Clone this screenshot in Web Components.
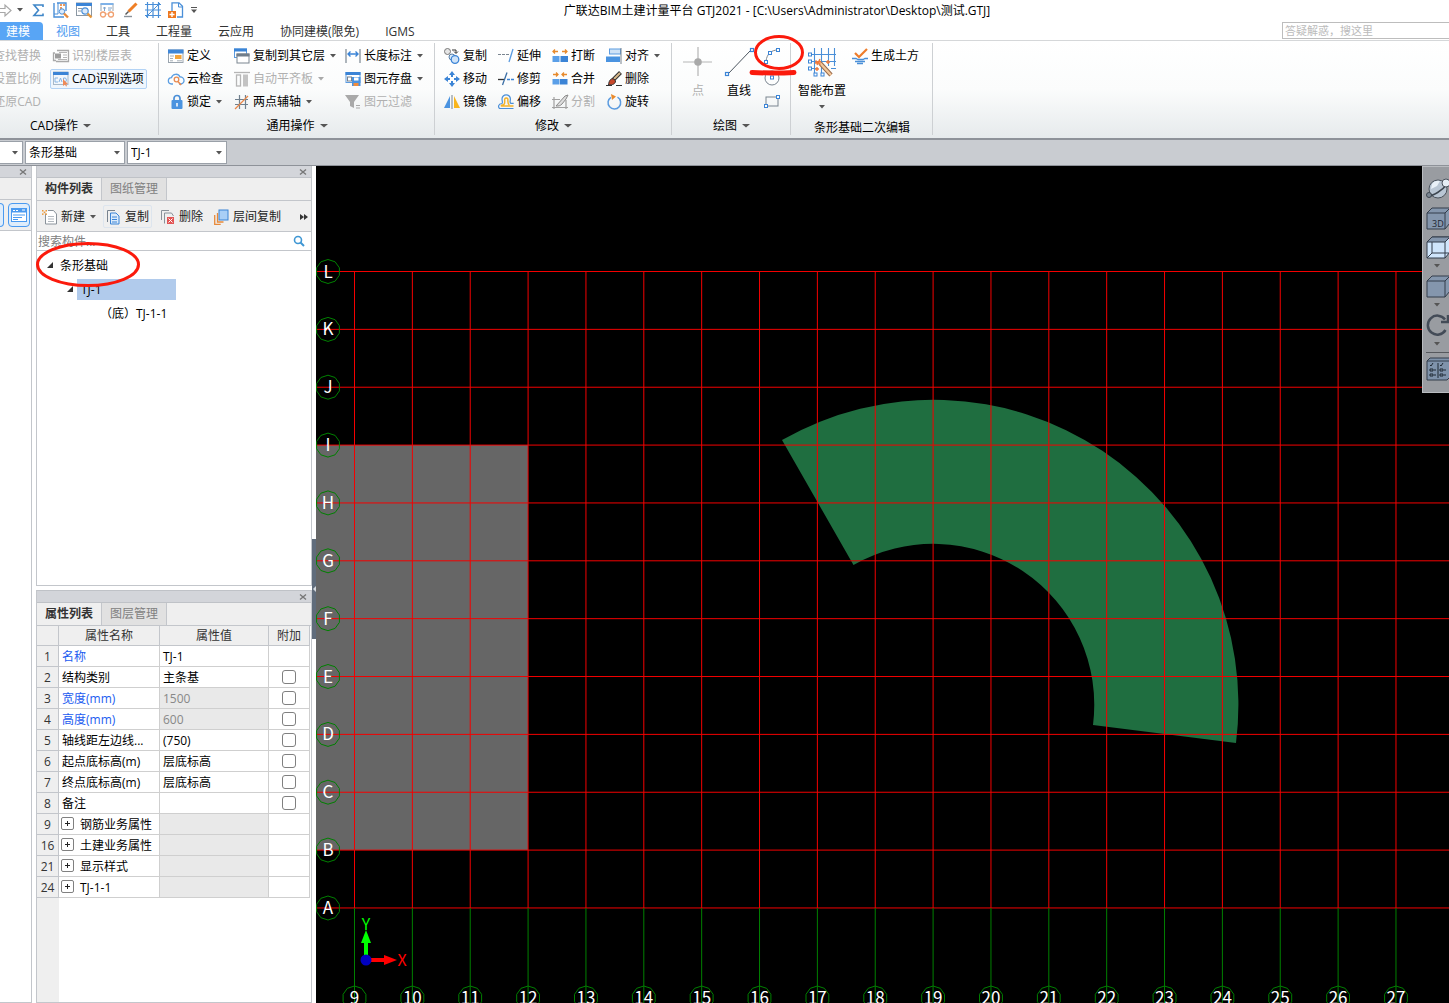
<!DOCTYPE html>
<html lang="zh-CN">
<head>
<meta charset="utf-8">
<title>广联达BIM土建计量平台 GTJ2021</title>
<style>
  html, body { margin: 0; height: 100%; overflow: hidden; }
  body { font: 12px/16px "Open Sans", "Noto Sans CJK SC", sans-serif; color: #000; background: #fff; }
</style>
</head>
<body>
<gtj-app></gtj-app>

<script>
const ICONS = {
  redo: ['16', '<path d="M4 6.500h7V3l6 5.500-6 5.500V10.500H4z" fill="#fff" stroke="#a8a8a8" stroke-width="1.200"/>'],
  sigma: ['16', '<path d="M13 5V3H4l4.500 5.300L4 13.500h9v-2" fill="none" stroke="#3f86c8" stroke-width="1.600"/>'],
  findmodel: ['16', '<path d="M1 1v14h10M4 1h9v8" fill="none" stroke="#4a8fd8" stroke-width="1.400"/><path d="M1 12h4V1" fill="none" stroke="#4a8fd8"/><g fill="#ee9a5c"><rect x="7" y="2" width="2" height="2"/><rect x="10" y="2" width="2" height="2"/><rect x="7" y="5" width="2" height="2"/></g><circle cx="9" cy="9.500" r="2.700" fill="#dceafa" stroke="#4a8fd8"/><path d="M11 11.500l4 4" stroke="#e58a3c" stroke-width="2.400"/>'],
  findwin: ['16', '<rect x=".5" y="1" width="15" height="12.500" fill="#fff" stroke="#8b97a3"/><rect y="1" width="16" height="3" fill="#3b84d6"/><path d="M2 6.500h4M2 9h3" stroke="#8b97a3"/><circle cx="9" cy="9" r="3.200" fill="#dceafa" stroke="#4a8fd8" stroke-width="1.200"/><path d="M11.500 11.500l4 4" stroke="#e5963c" stroke-width="2.400"/>'],
  glasses: ['16', '<path d="M2 9V1.500h12V9" fill="none" stroke="#9aa6b0"/><rect x="1.500" y="1" width="13" height="2" fill="#7fb2e8"/><path d="M4 6h3M9 6h4M9 8h3M5.500 5v4" stroke="#7fa4cc"/><g fill="#fff" stroke="#f0a070" stroke-width="1.300"><circle cx="4" cy="12.500" r="2.500"/><circle cx="12" cy="12.500" r="2.500"/></g><path d="M6.500 12h3" stroke="#f0a070"/>'],
  brush: ['16', '<path d="M6.500 9.500l8-8" stroke="#ef7f26" stroke-width="3"/><path d="M6.500 9.500l-3 3" stroke="#555" stroke-width="1.500"/><path d="M2 14.500h8" stroke="#8a929a" stroke-width="1.400"/>'],
  hatch: ['16', '<path d="M0 2.500h16M0 8h16M0 13.500h16M2.500 0v16M8 0v16M13.500 0v16" stroke="#4a8fd8" stroke-width="1.200"/><path d="M1 15L15 1" stroke="#4a8fd8"/>'],
  newdoc: ['16', '<path d="M4 9V.8h7l3.500 3.500V15H9" fill="#fff" stroke="#4a8fd8" stroke-width="1.300"/><path d="M10.500 1v4h4" fill="none" stroke="#4a8fd8"/><rect y="9" width="8" height="7" fill="#ee7820"/><path d="M4 10v5M1.500 12.500h5" stroke="#fff" stroke-width="1.400"/>'],
  floorlist: ['16', '<path d="M4 2.500h11.500v11H3M2 5H.5v7.500H3" fill="none" stroke="#a9a9a9" stroke-width="1.300"/><rect x="2" y="5.500" width="6" height="5" fill="#9d9d9d"/><path d="M6 4.500h8M10 7h4M10 9.500h4M5 11.500h9" stroke="#b5b5b5"/>'],
  cad: ['16', '<rect x=".5" y="1" width="14.500" height="12.500" fill="#f2f7fc" stroke="#a9b9c9"/><rect y="1" width="15.500" height="3" fill="#3b84d6"/><path d="M5 7H2v4h3M6 11l1.500-4L9 11M10.500 7v4h2l1-2-1-2z" fill="none" stroke="#86b4e4"/><path d="M10 8v7l2-1.500 1 2 1-.5-1-2h2z" fill="#ef8a58"/>'],
  define: ['16', '<rect x=".5" y="2" width="14.500" height="12.500" fill="#fff" stroke="#9aa4ae"/><rect y="1.500" width="15.500" height="4" fill="#3f87d8"/><path d="M2 8h4M2 10.500h3M2 12.800h3M9 12.800h5" stroke="#a6aeb6"/><rect x="7" y="7" width="6.500" height="4" fill="#f3a43b"/>'],
  cloud: ['16', '<path d="M5 13H3.500a3 3 0 010-6.300A4.500 4.500 0 0112 6a3.500 3.500 0 011 7h-2" fill="none" stroke="#5b9ee2" stroke-width="1.300"/><circle cx="8.500" cy="8.500" r="2.300" fill="none" stroke="#e88b52" stroke-width="1.300"/><path d="M10 10.500l3 3.500" stroke="#e88b52" stroke-width="1.600"/>'],
  lock: ['16', '<path d="M6 7V4.500a3 3 0 016 0V7" fill="none" stroke="#4a8fd8" stroke-width="1.700"/><rect x="3.500" y="6" width="11" height="9" rx="1" fill="#4a93e0"/><path d="M9 9v3.500" stroke="#fff" stroke-width="1.500"/>'],
  copyfloor: ['16', '<rect x=".5" y="1" width="12" height="8.500" fill="#fff" stroke="#5b9be0"/><rect y=".5" width="13" height="3" fill="#3b84d6"/><rect x="3" y="6" width="12" height="9" fill="#fff" stroke="#7b858f"/><rect x="2.500" y="5.500" width="13" height="3" fill="#707d8a"/>'],
  slab: ['16', '<path d="M0 1.500h16" stroke="#b5b5b5" stroke-width="1.300"/><rect x="2.500" y="4" width="4" height="11" fill="none" stroke="#b5b5b5" stroke-width="1.300"/><rect x="9" y="3.500" width="5" height="12" fill="#c3c3c3"/>'],
  axis: ['16', '<path d="M5.500 1v14M11.500 1v14M1 5.500h13M1 10.500h13" stroke="#70808e" stroke-width="1.200"/><path d="M1 15L14 2" stroke="#ea8648" stroke-width="1.300"/>'],
  length: ['16', '<path d="M1 1v14M15 1v14" stroke="#7a8590" stroke-width="1.200"/><path d="M3 6h10M5.500 3.500L3 6l2.500 2.500M10.500 3.500L13 6l-2.500 2.500" fill="none" stroke="#3b84d6" stroke-width="1.400"/>'],
  save: ['16', '<rect x="1" y="1.500" width="14" height="10" fill="#fff" stroke="#5b9be0"/><rect x=".5" y="1" width="15" height="3" fill="#3b84d6"/><rect x="2.500" y="6" width="4" height="4" fill="none" stroke="#77828e"/><path d="M7 6h8.500v9H7z" fill="#4a93e0"/><rect x="9" y="6.500" width="4.500" height="3" fill="#fff"/><rect x="8.500" y="12" width="5" height="3" fill="#f08c3c"/>'],
  filter: ['16', '<path d="M0 1h14L9 8v6l-4-2V8z" fill="#a9a9a9"/><path d="M11 11.500h4M11 14h4" stroke="#a9a9a9"/>'],
  copyobj: ['16', '<circle cx="3.500" cy="3.500" r="3" fill="#e6e6e6" stroke="#777"/><path d="M8 2h4v3M10 3.500l2 2 2-2" fill="none" stroke="#333"/><circle cx="8" cy="9" r="3" fill="#dcecfb" stroke="#5a7fa6"/><circle cx="11" cy="11.500" r="3.800" fill="#cfe3f8" stroke="#3b84d6" stroke-width="1.300"/>'],
  move: ['16', '<g fill="#3b84d6"><path d="M8 0l3 4H5zM8 16l3-4H5zM0 8l4-3v6zM16 8l-4-3v6z"/><path d="M7 4h2v2H7zM7 10h2v2H7zM4 7h2v2H4zM10 7h2v2h-2z"/></g>'],
  mirror: ['16', '<path d="M0 14L6 2v12z" fill="#4a93e0"/><path d="M8 1v14" stroke="#77828e"/><path d="M16 14L10 2v12z" fill="#f9b51c"/>'],
  extend: ['16', '<path d="M0 6.500h11" stroke="#7a8590" stroke-dasharray="3 1"/><path d="M15 1l-4 13" stroke="#5b9be0" stroke-width="1.300"/>'],
  trim: ['16', '<path d="M0 8.500h6" stroke="#333" stroke-width="1.300"/><path d="M9 1.500L4.500 14" stroke="#3b6fa6" stroke-width="1.300"/><path d="M9 8.500h7" stroke="#3b84d6" stroke-width="1.300" stroke-dasharray="3 1"/>'],
  offset: ['16', '<path d="M15.500 14.500H1.500C0 13 0 10 4 9.500 5 9 4 7 4 5a4.200 4.200 0 018.400 0c0 2-1 3.500.3 4.300h3" fill="none" stroke="#4a8fd8" stroke-width="1.200"/><path d="M15.500 12H4c-1 0-.8-1 .5-1 3 0 2-4 2.200-6a1.800 1.800 0 013.200 0c0 3-.5 5 1.500 6" fill="none" stroke="#f4b32a" stroke-width="1.500"/>'],
  breakobj: ['16', '<rect x=".5" y="8" width="7" height="6" fill="#5a9fe8"/><rect x="8.500" y="8" width="7.500" height="6" fill="#3b84d6"/><path d="M1 3.500h5M3 1.500l-2 2 2 2M10 3.500h5M13 1.500l2 2-2 2" fill="none" stroke="#e78a2c" stroke-width="1.300"/>'],
  merge: ['16', '<rect x=".5" y="8" width="7" height="5.500" fill="#5a9fe8"/><rect x="8" y="8" width="7.500" height="5.500" fill="#3b84d6"/><path d="M1 3.500h5M4 1.500l2 2-2 2M10 3.500h5M12 1.500l-2 2 2 2" fill="none" stroke="#e78a2c" stroke-width="1.300"/>'],
  split: ['16', '<path d="M2 3v12M0 5.500h8M0 13.500h16M14 6v9" stroke="#a0a0a0" stroke-width="1.200"/><path d="M4 12L13 2l3-1-2 4-4 5c-2 2-3 2-6 2z" fill="#ddd" stroke="#8a8a8a"/>'],
  align: ['16', '<rect x="3.500" y="1" width="11" height="5" fill="#cfe2f6" stroke="#5b9be0"/><rect y="8.500" width="14" height="5.500" fill="#4a93e0"/><path d="M15 0v16" stroke="#77828e"/>'],
  erase: ['16', '<path d="M14.500 1.500L7 9" stroke="#303030" stroke-width="4"/><path d="M14 2L7 9" stroke="#d9b98c" stroke-width="2"/><path d="M8 8c-3-1-5 1-5.500 6 4 0 7-1 7-4z" fill="#c8482a" stroke="#333"/><path d="M0 14.500h6M10 14.500h6" stroke="#333"/>'],
  rotate: ['16', '<path d="M11.500 3.200A6.300 6.300 0 115 3.300" fill="none" stroke="#5b9be0" stroke-width="1.500"/><path d="M5 0l5 2.500L6 6z" fill="#e98a2c"/>'],
  point: ['30', '<path d="M15 0v29M0 15h29" stroke="#b5b5b5" stroke-width="1.200"/><circle cx="15" cy="15" r="3.800" fill="#a9a9a9"/>'],
  line: ['30', '<path d="M4 27L26 4" stroke="#4b555f"/><g fill="#fff" stroke="#3b84d6" stroke-width="1.200"><rect x="1.500" y="25.500" width="3" height="3"/><rect x="26.500" y="1.500" width="3" height="3"/></g>'],
  arc: ['16', '<path d="M2 13C3 6 7 2 14 2" fill="none" stroke="#7a8590"/><g fill="#fff" stroke="#3b84d6"><rect x=".5" y="12.500" width="3" height="3"/><rect x="4.500" y="3.500" width="3" height="3"/><rect x="12.500" y=".5" width="3" height="3"/></g>'],
  circle: ['16', '<circle cx="8" cy="7" r="7" fill="none" stroke="#7a8590"/><rect x="6.500" y="5" width="3" height="3" fill="#fff" stroke="#3b84d6"/>'],
  rect: ['16', '<rect x="2" y="3" width="12" height="9" fill="none" stroke="#7a8590"/><g fill="#fff" stroke="#3b84d6"><rect x=".5" y="10.500" width="3" height="3"/><rect x="12.500" y="1.500" width="3" height="3"/></g>'],
  smart: ['30', '<path d="M3 7.500h26M3 14.500h26M3 21.500h8M7.500 1v26M14.500 1v26M21.500 1v18M27.500 1v18M24 21.500h5" stroke="#4a8fd8" stroke-width="1.100" fill="none"/><g fill="#fff" stroke="#3b84d6"><rect x="1.500" y="6" width="3" height="3"/><rect x="1.500" y="13" width="3" height="3"/><rect x="1.500" y="20" width="3" height="3"/><rect x="7" y="26" width="3" height="3"/><rect x="14" y="26" width="3" height="3"/></g><path d="M13 16l11 12" stroke="#9a6a4a" stroke-width="4.400"/><path d="M13 16l11 12" stroke="#f2c79a" stroke-width="2.400"/><path d="M8.500 13.500l5 4M13 12l-3 6M8 16l6-1.500M19 15h4M21 13v4M8 22h4M10 20v4" fill="none" stroke="#f07a3c" stroke-width="1.400"/>'],
  earth: ['16', '<path d="M3 5l4 4 8-8" fill="none" stroke="#ee7d2c" stroke-width="2.200"/><path d="M0 10.500h4l2 1h5l2-1h3M3 13.500h10M5 15.500h6" stroke="#4a8fd8" stroke-width="1.300" fill="none"/>'],
  newitem: ['16', '<path d="M3.500 4.500V15h11V5l-3-3.500H6" fill="#fff" stroke="#8a929a"/><path d="M6 7.500h6M6 10h6M6 12.500h6" stroke="#b3b9bf"/><g fill="#ef9a38"><rect x="0" y="1" width="1.500" height="1.500"/><rect x="3.500" y="1" width="1.500" height="1.500"/><rect x="1.700" y="2.600" width="1.600" height="1.600"/><rect x="0" y="4.400" width="1.500" height="1.500"/><rect x="3.500" y="4.400" width="1.500" height="1.500"/></g>'],
  copydoc: ['16', '<path d="M1.500 13V1.500H9" fill="none" stroke="#77828e"/><path d="M4.500 4h5.500l3 3v8H4.500z" fill="#dcebfb" stroke="#3b84d6"/><path d="M6 8h5M6 10.500h5M6 13h5" stroke="#3b84d6"/>'],
  deldoc: ['16', '<path d="M1.500 11V1.500H9M4.500 14.500V4h7l2 3" fill="none" stroke="#8a929a"/><rect x="7" y="8" width="7" height="7" fill="#e25555"/><path d="M8.500 9.500l4 4M12.500 9.500l-4 4" stroke="#fff"/>'],
  copylayer: ['16', '<path d="M.7 6v9.300h6M3.500 4v9h6" fill="none" stroke="#e88a3a" stroke-width="1.300"/><rect x="5" y="1" width="9" height="10" fill="#a9cff6" stroke="#3b84d6"/>'],
  search: ['12', '<circle cx="5" cy="5" r="3.500" fill="none" stroke="#3f97d4" stroke-width="1.600"/><path d="M7.500 7.500L11 11" stroke="#3f97d4" stroke-width="2"/>'],
  panel: ['16', '<rect x=".5" y="1.500" width="15" height="13" fill="#fff" stroke="#4a9af0"/><rect x=".5" y="1.500" width="15" height="4" fill="#4a9af0"/><path d="M2 3.500h2M5 3.500h2M11 3h3" stroke="#fff"/><path d="M2 8h12M2 10.500h9M2 12.500h5" stroke="#4a9af0"/>'],
  orbit: ['24', '<circle cx="12" cy="12" r="9" fill="#b9c6d4" stroke="#4a525c"/><path d="M6 7a8 8 0 018-3l-3 5-6 3z" fill="#e9f1f8"/><path d="M2 19c5 0 14-5 20-13" fill="none" stroke="#3d4650" stroke-width="1.500"/><circle cx="3" cy="18" r="2.500" fill="#7c8793" stroke="#3d4650"/><circle cx="20" cy="6" r="4" fill="#e5edf5" stroke="#4a525c"/>'],
  cube3d: ['24', '<path d="M1 7l5-5h18v15l-5 6H1z" fill="#8496ad" stroke="#333c4a"/><path d="M1 7h18v16M19 7l5-5" fill="none" stroke="#333c4a"/><text x="6" y="21" font-size="9" fill="#1d2530" font-family="Open Sans, sans-serif">3D</text>'],
  cubewire: ['24', '<path d="M1 7l5-5h18v15l-5 6H1z" fill="#cfe5fb" stroke="#333c4a"/><path d="M1 7l5-5h18l-5 5z" fill="#8496ad" stroke="#333c4a"/><path d="M19 7v16M6 7v11h18M6 18l-5 5" fill="none" stroke="#333c4a"/>'],
  cube: ['24', '<path d="M1 7l5-5h18v15l-5 6H1z" fill="#8496ad" stroke="#333c4a"/><path d="M1 7h18v16M19 7l5-5" fill="none" stroke="#333c4a"/>'],
  spin: ['24', '<path d="M19 6.500A9.500 9.500 0 1019.500 17" fill="none" stroke="#434b57" stroke-width="2.500"/><path d="M22 2v7h-7" fill="none" stroke="#434b57" stroke-width="2.500"/>'],
  checklist: ['24', '<path d="M1 4l3-3h20v19l-3 3H1z" fill="#7f93ab" stroke="#333c4a"/><path d="M1 4h23" fill="none" stroke="#333c4a"/><path d="M4 8l1 1 2-3M14 8l1 1 2-3M4 12h3v2H4zM4 17h3v2H4zM14 12h3v2h-3zM14 17h3v2h-3zM8 13h2M8 18h2M18 13h2M18 18h2M12 6v15" fill="none" stroke="#1f2833"/>']
};

const icon = (name, cls = '') => {
  const [size, body] = ICONS[name];
  return `<svg class="${cls}" width="${size}" height="${size}" viewBox="0 0 ${size} ${size}" aria-hidden="true">${body}</svg>`;
};
const caret = (w = 6) => `<svg class="caret" width="${w}" height="4" viewBox="0 0 6 4" preserveAspectRatio="none" aria-hidden="true"><path d="M0 0h6L3 3.500z" fill="#555"/></svg>`;
const BASE = `
  :host { display: block; box-sizing: border-box; }
  *, *::before { box-sizing: border-box; }
  button, input, select { font: inherit; color: inherit; margin: 0; }
  button { background: none; border: 1px solid transparent; padding: 0; border-radius: 2px; }
  svg { display: block; flex: none; overflow: visible; }
`;

class GtjElement extends HTMLElement {
  constructor() { super(); this.attachShadow({ mode: 'open' }); }
  connectedCallback() { this.shadowRoot.innerHTML = `<style>${BASE}${this.css()}</style>${this.html()}`; }
  css() { return ''; }
  html() { return '<slot></slot>'; }
}

customElements.define('gtj-tool', class extends GtjElement {
  css() { return `
    button { display: flex; align-items: center; gap: 3px; height: 20px; padding: 0 2px; white-space: nowrap; }
    :host([disabled]) { color: #b0b0b0; }
    :host([disabled]) .caret { opacity: .5; }
    :host([framed]) button { border-color: #b3d3f5; background: #eff6fd; }
    :host([soft]) button { border-color: #dde5ee; height: 23px; }
    .caret { margin-left: 2px; }
    :host([big]) button { flex-direction: column; gap: 6px; height: auto; padding: 0; border-width: 0; margin: 0 auto; }
    :host([big]) .caret { margin: 0; }
  `; }
  html() {
    const i = this.getAttribute('icon');
    return `<button type="button" ${this.hasAttribute('disabled') ? 'disabled' : ''} style="color:inherit">
      ${i ? icon(i) : ''}<span><slot></slot></span>${this.hasAttribute('menu') ? caret() : ''}</button>`;
  }
});

customElements.define('gtj-icon-button', class extends GtjElement {
  css() { return `button { display: grid; place-items: center; border: 0; }`; }
  html() { return `<button type="button" aria-label="${this.getAttribute('label')}">${icon(this.getAttribute('icon'))}</button>`; }
});

customElements.define('gtj-titlebar', class extends GtjElement {
  css() { return `
    :host { display: flex; align-items: center; height: 20px; background: #fff; }
    .quick { display: flex; align-items: center; gap: 7px; }
    .quick > :first-child { margin-left: -6px; }
    h1 { flex: 1; margin: 0; padding: 2px 92px 0 0; font: inherit; text-align: center; white-space: nowrap; }
  `; }
  html() {
    const b = (n, l) => `<gtj-icon-button icon="${n}" label="${l}"></gtj-icon-button>`;
    return `<div class="quick">${b('redo', '重做')}${caret()}${b('sigma', '汇总计算')}${b('findmodel', '查找图元')}${b('findwin', '查看')}${b('glasses', '查看计算式')}${b('brush', '格式刷')}${b('hatch', '轴网')}${b('newdoc', '新建')}<svg width="6" height="6" viewBox="0 0 6 6"><path d="M0 .5h6" stroke="#555"/><path d="M0 2.500h6L3 6z" fill="#555"/></svg></div>
    <h1>广联达BIM土建计量平台 GTJ2021 - [C:\\Users\\Administrator\\Desktop\\测试.GTJ]</h1>`;
  }
});

customElements.define('gtj-menu', class extends GtjElement {
  css() { return `
    :host { display: flex; height: 21px; padding-top: 2px; border-bottom: 1px solid #d5d7d9; background: #fff; }
    nav { display: flex; flex: 1; }
    a { padding: 0 13px; line-height: 19px; color: #333; text-decoration: none; white-space: nowrap; }
    a.on { background: #58a5f5; color: #fff; padding-left: 6px; border-radius: 0 4px 0 0; }
    a.next { color: #4a9af0; }
    input { width: 167px; height: 17px; border: 1px solid #bdbdbd; border-right: 0; border-radius: 0; padding: 0 2px; font-size: 11px; background: #fff; }
    input::placeholder { color: #bbb; }
  `; }
  html() { return `<nav><a class="on" href="#">建模</a><a class="next" href="#">视图</a><a href="#">工具</a><a href="#">工程量</a><a href="#">云应用</a><a href="#">协同建模(限免)</a><a href="#">IGMS</a></nav>
    <input type="search" aria-label="答疑解惑" placeholder="答疑解惑，搜这里">`; }
});

customElements.define('gtj-group', class extends GtjElement {
  css() { return `
    :host { display: flex; flex-direction: column; position: relative; flex: none; padding-top: 3px; }
    :host::after { content: ""; position: absolute; right: 0; top: 2px; bottom: 3px; width: 1px; background: #cdd0d3; }
    .body { flex: none; height: 70px; }
    .label { flex: none; display: flex; justify-content: center; align-items: center; gap: 5px; height: 24px; }
    :host([plain]) .label { height: 28px; }
    :host([clipped]) .label { padding-right: 38px; }
  `; }
  html() { return `<div class="body"><slot></slot></div><div class="label"><span>${this.getAttribute('label')}</span>${this.hasAttribute('plain') ? '' : caret(8)}</div>`; }
});

customElements.define('gtj-ribbon', class extends GtjElement {
  css() { return `
    :host { display: flex; height: 99px; border-bottom: 2px solid #8e9299; background: linear-gradient(#fff, #fbfcfc 50%, #e6eaec); }
    .grid { display: grid; grid-auto-flow: column; grid-template-rows: repeat(3, 23px); align-items: center; justify-items: start; }
    .cad { grid-template-columns: 44px auto; column-gap: 6px; justify-content: start; }
    .cad .tail { justify-self: end; }
    .common { grid-template-columns: 66px 111px auto; padding-left: 6px; justify-content: start; }
    .modify { grid-template-columns: repeat(4, 54px); padding-left: 6px; }
    .draw { display: grid; grid-template-columns: 32px 32px 16px; column-gap: 9px; padding: 3px 0 0 10px; }
    .shapes { display: grid; grid-template-rows: repeat(3, 23px); align-items: center; margin-top: -3px; }
    .second { display: grid; grid-template-columns: 48px auto; column-gap: 3px; justify-content: start; align-items: start; padding-left: 7px; }
    .second gtj-tool[big] { margin-top: 3px; }
    .second gtj-tool:last-child { margin-top: 2px; }
    .w1 { width: 159px; } .w2 { width: 276px; } .w3 { width: 237px; } .w4 { width: 119px; } .w5 { width: 142px; }
  `; }
  html() {
    const t = (i, s, a = '') => `<gtj-tool ${i ? `icon="${i}"` : ''} ${a}>${s}</gtj-tool>`;
    return `
    <gtj-group class="w1" label="CAD操作" clipped><div class="grid cad">
      ${t('', '查找替换', 'disabled class="tail"')}${t('', '设置比例', 'disabled class="tail"')}${t('', '还原CAD', 'disabled class="tail"')}
      ${t('floorlist', '识别楼层表', 'disabled')}${t('cad', 'CAD识别选项', 'framed')}</div></gtj-group>
    <gtj-group class="w2" label="通用操作"><div class="grid common">
      ${t('define', '定义')}${t('cloud', '云检查')}${t('lock', '锁定', 'menu')}
      ${t('copyfloor', '复制到其它层', 'menu')}${t('slab', '自动平齐板', 'menu disabled')}${t('axis', '两点辅轴', 'menu')}
      ${t('length', '长度标注', 'menu')}${t('save', '图元存盘', 'menu')}${t('filter', '图元过滤', 'disabled')}</div></gtj-group>
    <gtj-group class="w3" label="修改"><div class="grid modify">
      ${t('copyobj', '复制')}${t('move', '移动')}${t('mirror', '镜像')}
      ${t('extend', '延伸')}${t('trim', '修剪')}${t('offset', '偏移')}
      ${t('breakobj', '打断')}${t('merge', '合并')}${t('split', '分割', 'disabled')}
      ${t('align', '对齐', 'menu')}${t('erase', '删除')}${t('rotate', '旋转')}</div></gtj-group>
    <gtj-group class="w4" label="绘图"><div class="draw">
      ${t('point', '点', 'big disabled')}${t('line', '直线', 'big')}
      <div class="shapes"><gtj-icon-button icon="arc" label="三点弧"></gtj-icon-button><gtj-icon-button icon="circle" label="圆"></gtj-icon-button><gtj-icon-button icon="rect" label="矩形"></gtj-icon-button></div></div></gtj-group>
    <gtj-group class="w5" label="条形基础二次编辑" plain><div class="second">
      ${t('smart', '智能布置', 'big menu')}${t('earth', '生成土方')}</div></gtj-group>`;
  }
});

customElements.define('gtj-select', class extends GtjElement {
  css() { return `
    :host { position: relative; }
    select { appearance: none; width: 100%; height: 23px; border: 1px solid #9aa0a8; border-radius: 0; background: #fff; padding: 0 16px 0 3px; }
    :host([clipped]) select { border-left: 0; padding: 0; }
    .caret { position: absolute; right: 5px; top: 10px; pointer-events: none; }
  `; }
  html() { return `<select aria-label="${this.getAttribute('label')}"><option>${this.getAttribute('value')}</option></select>${caret()}`; }
});

customElements.define('gtj-selectors', class extends GtjElement {
  css() { return `
    :host { display: flex; gap: 2px; height: 26px; padding-top: 1px; background: #c9ccd1; border-bottom: 1px solid #8e9299; }
    gtj-select { width: 100px; }
    gtj-select[clipped] { width: 23px; }
  `; }
  html() { return `<gtj-select label="构件类型" value="" clipped></gtj-select><gtj-select label="构件" value="条形基础"></gtj-select><gtj-select label="构件名称" value="TJ-1"></gtj-select>`; }
});

customElements.define('gtj-dock', class extends GtjElement {
  css() { return `
    :host { display: flex; flex-direction: column; border: 1px solid #c3c6cb; border-top: 0; background: #fff; min-height: 0; }
    .bar { flex: none; display: flex; justify-content: flex-end; align-items: center; height: 12px; padding-right: 5px; background: #d3d5da; border-bottom: 1px solid #bfc2c7; }
    .bar button { border: 0; }
    .tabs { flex: none; display: flex; height: 23px; background: #efefef; border-bottom: 1px solid #c3c6cb; }
    .tabs button { padding: 0 8px; border: 0; border-right: 1px solid #c3c6cb; border-radius: 0; color: #808080; background: #e1e1e1; }
    .tabs button.on { font-weight: bold; color: #333; background: #efefef; }
  `; }
  html() {
    const tabs = this.getAttribute('tabs');
    return `<div class="bar"><button type="button" aria-label="关闭"><svg width="6" height="6" viewBox="0 0 6 6"><path d="M0 .5l6 5M6 .5l-6 5" stroke="#777" stroke-width="1.400"/></svg></button></div>
    ${tabs ? `<div class="tabs">${tabs.split(',').map((t, i) => `<button type="button" class="${i ? '' : 'on'}">${t}</button>`).join('')}</div>` : ''}<slot></slot>`;
  }
});

customElements.define('gtj-side', class extends GtjElement {
  css() { return `
    .head { height: 22px; background: #efefef; border-bottom: 1px solid #c3c6cb; }
    .strip { display: flex; align-items: center; gap: 4px; height: 31px; background: #efefef; border-bottom: 1px solid #c3c6cb; }
    button { display: grid; place-items: center; width: 22px; height: 24px; border-color: #4a9af0; border-radius: 4px; background: #dfedfb; }
    button.cut { width: 4px; border-left: 0; border-radius: 0 4px 4px 0; }
  `; }
  html() { return `<div class="head"></div><div class="strip"><button type="button" class="cut" aria-label="列表"></button><button type="button" aria-label="面板">${icon('panel')}</button></div>`; }
});

customElements.define('gtj-components', class extends GtjElement {
  css() { return `
    :host { display: flex; flex-direction: column; flex: 1; }
    .tools { display: flex; align-items: center; gap: 4px; height: 30px; padding: 1px 0 0 2px; background: #efefef; color: #222; }
    .tools gtj-tool + gtj-tool + gtj-tool { margin-left: 1px; }
    .more { margin: 0 3px 0 auto; border: 0; }
    .find { display: flex; align-items: center; height: 20px; padding-right: 6px; border: solid #c3c6cb; border-width: 1px 0; }
    .find input { flex: 1; min-width: 0; height: 18px; border: 0; padding: 0 1px; background: none; }
    .find input::placeholder { color: #808080; }
    ul { margin: 0; padding: 2px 0 0; list-style: none; }
    li { display: flex; align-items: center; height: 24px; }
    li span { line-height: 21px; }
    .l1 { padding-left: 10px; gap: 7px; } .l2 { padding-left: 30px; gap: 4px; } .l3 { padding-left: 63px; }
    .l2 span { width: 99px; padding-left: 4px; background: #b1cbec; }
  `; }
  html() {
    const tri = '<svg width="6" height="6" viewBox="0 0 6 6"><path d="M6 0v6H0z" fill="#333"/></svg>';
    return `<div class="tools"><gtj-tool icon="newitem" menu>新建</gtj-tool><gtj-tool icon="copydoc" soft>复制</gtj-tool><gtj-tool icon="deldoc">删除</gtj-tool><gtj-tool icon="copylayer">层间复制</gtj-tool>
      <button type="button" class="more" aria-label="更多"><svg width="8" height="6" viewBox="0 0 8 6"><path d="M0 0l4 3-4 3zM4 0l4 3-4 3z" fill="#333"/></svg></button></div>
    <div class="find"><input type="text" aria-label="搜索构件" placeholder="搜索构件...">${icon('search')}</div>
    <ul><li class="l1">${tri}<span>条形基础</span></li><li class="l2">${tri}<span>TJ-1</span></li><li class="l3"><span>（底）TJ-1-1</span></li></ul>`;
  }
});

customElements.define('gtj-properties', class extends GtjElement {
  css() { return `
    :host { flex: 1; background: linear-gradient(to right, #efefef 22px, #fff 22px); }
    table { width: 273px; border-collapse: separate; border-spacing: 0; table-layout: fixed; }
    th, td { height: 21px; padding: 2px 3px 0; border: solid #cfcfcf; border-width: 0 1px 1px 0; font-weight: normal; text-align: left; overflow: hidden; white-space: nowrap; background: #fff; line-height: 18px; }
    thead th { height: 20px; padding: 0; line-height: 19px; background: #efefef; text-align: center; color: #333; border-color: #c3c6cb; }
    tbody th { background: #efefef; text-align: center; padding: 2px 0 0; color: #333; border-color: #c3c6cb; }
    .key { color: #1c5cf0; }
    td.off { background: #e9e9e9; color: #888; }
    td:last-child { text-align: center; padding: 0; }
    input { appearance: none; display: block; width: 14px; height: 14px; margin: 0 auto; border: 1px solid #808080; border-radius: 3px; background: #fff; }
    .tree { display: flex; align-items: flex-start; gap: 6px; margin-left: -1px; }
    .tree button { display: grid; place-items: center; width: 13px; height: 13px; margin-top: 1px; border-color: #808080; }
  `; }
  html() {
    const rows = [
      ['1', '名称', 'TJ-1', 'key', 0], ['2', '结构类别', '主条基', '', 1], ['3', '宽度(mm)', '1500', 'key off', 1], ['4', '高度(mm)', '600', 'key off', 1],
      ['5', '轴线距左边线...', '(750)', '', 1], ['6', '起点底标高(m)', '层底标高', '', 1], ['7', '终点底标高(m)', '层底标高', '', 1], ['8', '备注', '', '', 1],
      ['9', '钢筋业务属性', '', 'group off', 0], ['16', '土建业务属性', '', 'group off', 0], ['21', '显示样式', '', 'group off', 0], ['24', 'TJ-1-1', '', 'group off', 0]];
    const plus = '<svg width="7" height="7" viewBox="0 0 7 7"><path d="M3.500 1v5M1 3.500h5" stroke="#222"/></svg>';
    return `<table><colgroup><col style="width:22px"><col style="width:101px"><col style="width:109px"><col style="width:41px"></colgroup>
    <thead><tr><th></th><th>属性名称</th><th>属性值</th><th>附加</th></tr></thead><tbody>${rows.map(([n, k, v, f, c]) => `
      <tr><th>${n}</th><td class="${f.includes('key') ? 'key' : ''}">${f.includes('group') ? `<div class="tree"><button type="button" aria-label="展开${k}">${plus}</button><span>${k}</span></div>` : k}</td>
      <td class="${f.includes('off') ? 'off' : ''}">${v}</td><td>${c ? `<input type="checkbox" aria-label="附加 ${k}">` : ''}</td></tr>`).join('')}</tbody></table>`;
  }
});

/* Plan view: axis grid, raft slab and arc strip footing. */
customElements.define('gtj-plan', class extends GtjElement {
  css() { return `
    :host { background: #000; overflow: hidden; }
    svg { width: 100%; height: 100%; overflow: hidden; font: 17px "Noto Sans CJK SC", sans-serif; }
    .axis { font-size: 16px; }
  `; }
  html() {
    const step = 57.86, x0 = 38.5, y0 = 105.500, yEnd = y0 + 11 * step;
    const bubble = (cx, cy) => {
      const p = [];
      for (let i = 0; i < 10; i++) p.push(`${(cx + 12 * Math.sin(i * Math.PI / 5)).toFixed(1)},${(cy - 12 * Math.cos(i * Math.PI / 5)).toFixed(1)}`);
      return `<polygon points="${p.join(' ')}" fill="none" stroke="#008000"/>`;
    };
    let lines = '', marks = '';
    [...'LKJIHGFEDCBA'].forEach((c, i) => {
      const y = y0 + i * step;
      lines += `<line x1="0" x2="100%" y1="${y}" y2="${y}" stroke="#f40000"/>`;
      marks += bubble(12, y) + `<text x="12" y="${y + 6}" fill="#fff" text-anchor="middle">${c}</text>`;
    });
    for (let i = 0; i < 19; i++) {
      const x = x0 + i * step;
      lines += `<line x1="${x}" x2="${x}" y1="${y0}" y2="${yEnd}" stroke="#f40000"/><line x1="${x}" x2="${x}" y1="${yEnd}" y2="844" stroke="#008000"/>`;
      marks += bubble(x, 832) + `<text x="${x}" y="838" fill="#fff" text-anchor="middle">${i + 9}</text>`;
    }
    return `<svg role="img" aria-label="条形基础平面图">
      <rect x="0" y="279" width="212" height="405" fill="#666"/>
      <path d="M466 274A305 305 0 01920 577L777 559A161 161 0 00537.500 399Z" fill="#1f6e40"/>
      ${lines}${marks}
      <path d="M50 794V776" stroke="#0f0" stroke-width="4"/><path d="M50 764l5 13H45z" fill="#0f0"/>
      <path d="M50 794H69" stroke="#f00" stroke-width="4"/><path d="M81 794l-13-5v10z" fill="#f00"/>
      <circle cx="50" cy="794" r="5.500" fill="#0000c0"/>
      <text class="axis" x="86" y="800" fill="#f00" text-anchor="middle">X</text>
      <text class="axis" x="50" y="764" fill="#0f0" text-anchor="middle">Y</text></svg>`;
  }
});

customElements.define('gtj-viewbar', class extends GtjElement {
  css() { return `
    :host { display: flex; flex-direction: column; width: 27px; padding: 10px 0 6px 3px; background: #999ca1; border: 1px solid #b9bcc0; border-right: 0; overflow: hidden; }
    gtj-icon-button { flex: none; width: 24px; height: 24px; margin-bottom: 5px; }
    .caret { margin: 0 0 6px 8px; }
    hr { flex: none; width: 100%; height: 1px; margin: 0 0 4px; border: 0; background: #55585d; }
  `; }
  html() {
    const b = (n, l, m) => `<gtj-icon-button icon="${n}" label="${l}"></gtj-icon-button>${m ? caret() : ''}`;
    return b('orbit', '动态观察') + b('cube3d', '三维') + b('cubewire', '线框', 1) + b('cube', '视图', 1) + b('spin', '旋转', 1) + '<hr>' + b('checklist', '显示设置');
  }
});

/* Red pen marks drawn over the interface. */
customElements.define('gtj-pen', class extends GtjElement {
  css() { return `
    :host { position: absolute; inset: 0; pointer-events: none; }
    svg { width: 100%; height: 100%; }
  `; }
  html() { return `<svg fill="none" stroke="#fb1a0c" stroke-width="3" stroke-linecap="round" aria-hidden="true">
    <ellipse cx="779" cy="52.500" rx="23.500" ry="16"/><path d="M752 72.500q22 1 42 0" stroke-width="5"/>
    <ellipse cx="88" cy="264.500" rx="50.500" ry="21"/></svg>`; }
});

customElements.define('gtj-app', class extends GtjElement {
  css() { return `
    :host { position: relative; display: flex; flex-direction: column; height: 100vh; overflow: hidden; }
    main { flex: 1; display: flex; min-height: 0; }
    .side { width: 32px; border-left: 0; }
    .docks { display: flex; flex-direction: column; gap: 4px; width: 276px; margin-left: 4px; }
    .docks gtj-dock:first-child { flex: 0 0 420px; }
    .docks gtj-dock:last-child { flex: 1; border-top: 1px solid #bfc2c7; }
    .split { display: flex; align-items: center; width: 4px; }
    .split button { display: grid; place-items: center; width: 4px; height: 100px; margin-bottom: -9px; border: 0; border-radius: 0; background: #606c7b; }
    .stage { flex: 1; display: grid; min-width: 0; }
    .stage > * { grid-area: 1 / 1; }
    gtj-viewbar { justify-self: end; align-self: start; }
  `; }
  html() { return `
    <gtj-titlebar></gtj-titlebar><gtj-menu></gtj-menu><gtj-ribbon></gtj-ribbon><gtj-selectors></gtj-selectors>
    <main>
      <gtj-dock class="side"><gtj-side></gtj-side></gtj-dock>
      <div class="docks">
        <gtj-dock tabs="构件列表,图纸管理"><gtj-components></gtj-components></gtj-dock>
        <gtj-dock tabs="属性列表,图层管理"><gtj-properties></gtj-properties></gtj-dock>
      </div>
      <div class="split"><button type="button" aria-label="折叠面板"><svg width="3" height="6" viewBox="0 0 3 6"><path d="M3 0v6L0 3z" fill="#d5dae0"/></svg></button></div>
      <div class="stage"><gtj-plan></gtj-plan><gtj-viewbar></gtj-viewbar></div>
    </main>
    <gtj-pen></gtj-pen>`; }
});
</script>
</body>
</html>
